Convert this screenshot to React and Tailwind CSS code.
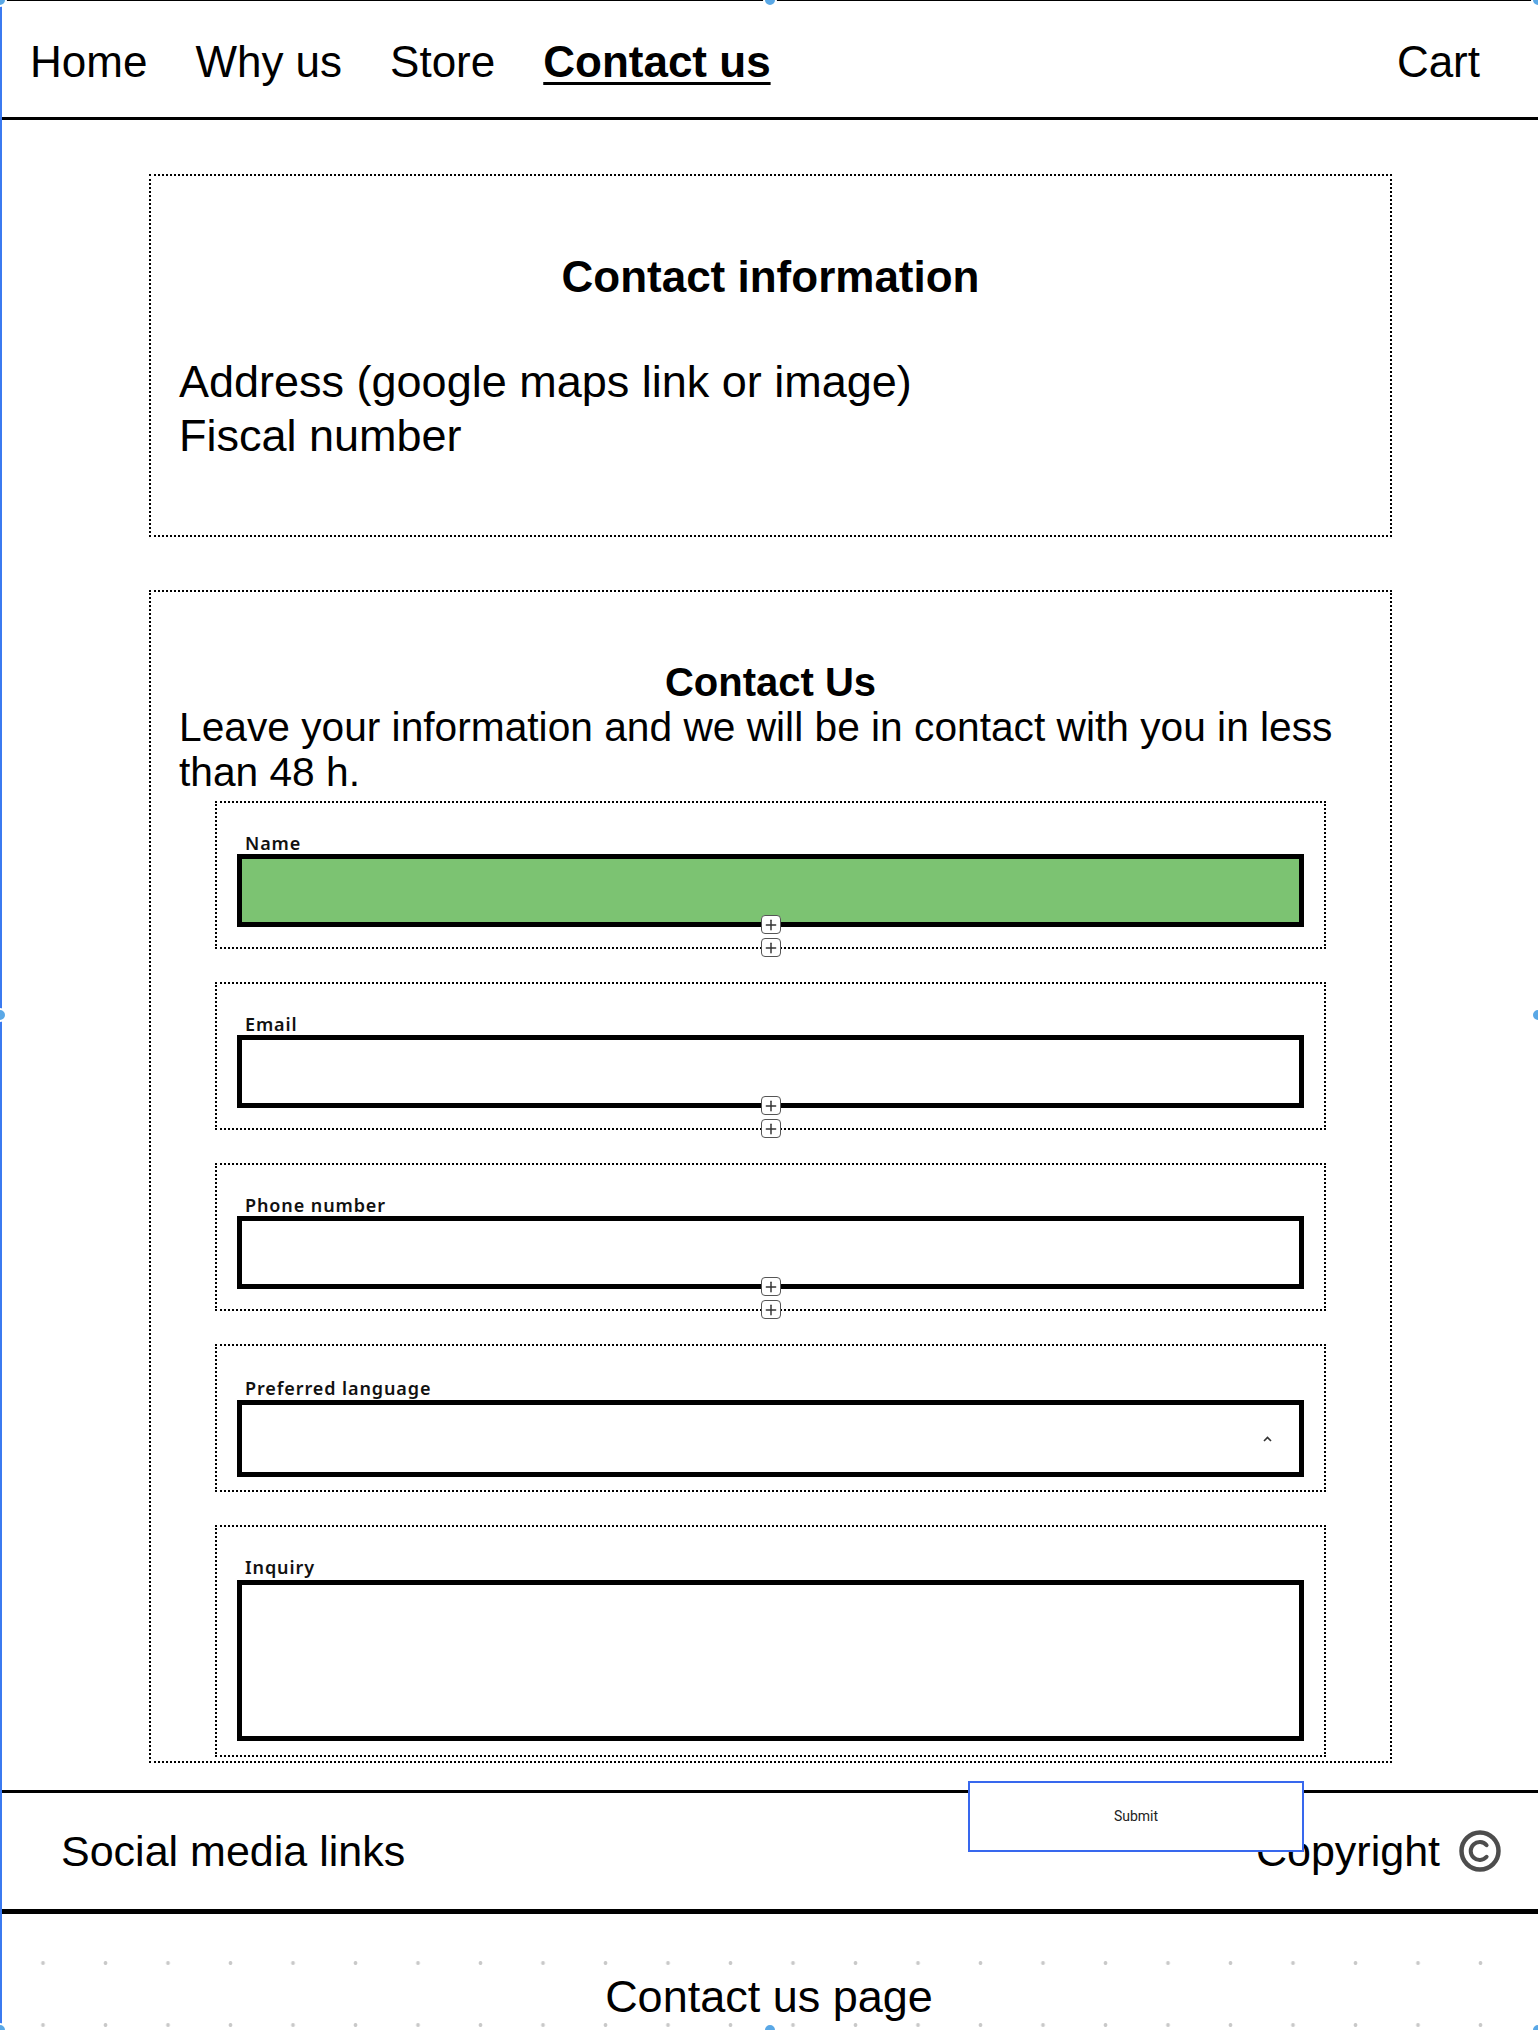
import React from 'react';
import { Plus } from 'lucide-react';

const navItems = ['Home', 'Why us', 'Store', 'Contact us'];

const AddHandle = ({ className }) => (
  <div className={`absolute left-1/2 -translate-x-1/2 w-[20px] h-[19px] bg-white border border-[#555] rounded-[4px] flex items-center justify-center ${className}`}>
    <Plus size={16} strokeWidth={2.2} className="text-[#333]" />
  </div>
);

const FieldLabel = ({ children }) => (
  <label className="block h-[22px] pl-[8px] leading-[22px] text-[18px] font-semibold tracking-[0.05em] text-[#111] font-['Noto_Sans',sans-serif]">
    {children}
  </label>
);

const FieldCard = ({ label, children, handles = false, tall = false }) => (
  <div className={`relative border-2 border-dotted border-black px-[20px] ${tall ? 'pt-[31px] pb-[13px]' : 'pt-[29px] pb-[20px]'}`}>
    <FieldLabel>{label}</FieldLabel>
    {children}
    {handles && (
      <>
        <AddHandle className="top-[112px]" />
        <AddHandle className="top-[135px]" />
      </>
    )}
  </div>
);

const CopyrightMark = () => (
  <svg width="44" height="44" viewBox="0 0 44 44" fill="none" className="text-[#4d4d4d]">
    <circle cx="22" cy="22" r="18.5" stroke="currentColor" strokeWidth="4.5" />
    <path d="M28.6 16.2a9 9 0 1 0 0 11.6" stroke="currentColor" strokeWidth="4" strokeLinecap="round" />
  </svg>
);

const handleDots = [
  'left-0 top-0',
  'left-[770px] top-0',
  'left-[1538px] top-0',
  'left-0 top-[1015px]',
  'left-[1538px] top-[1015px]',
  'left-0 top-[2030px]',
  'left-[770px] top-[2030px]',
  'left-[1538px] top-[2030px]',
];

export default function App() {
  return (
    <div className="relative w-[1538px] h-[2030px] overflow-hidden bg-white text-black font-['Liberation_Sans',Arial,sans-serif]">
      {/* top nav */}
      <nav className="h-[120px] border-t border-b-[3px] border-black flex items-center justify-between pl-[30px] pr-[58px] pt-[6px]">
        <div className="flex items-center gap-12 text-[44px] leading-[44px]">
          {navItems.map((item) => (
            <span
              key={item}
              className={item === 'Contact us' ? 'font-bold underline decoration-[3px] underline-offset-[5px]' : ''}
            >
              {item}
            </span>
          ))}
        </div>
        <span className="text-[44px] leading-[44px]">Cart</span>
      </nav>

      {/* contact information */}
      <section className="ml-[149px] mr-[146px] mt-[54px] border-2 border-dotted border-black px-[28px] pt-[76px] pb-[72px]">
        <h2 className="text-center text-[44px] leading-[50px] font-bold">Contact information</h2>
        <div className="mt-[53px] text-[45px] leading-[54px]">
          <p>Address (google maps link or image)</p>
          <p>Fiscal number</p>
        </div>
      </section>

      {/* contact form */}
      <section className="ml-[149px] mr-[146px] mt-[53px] h-[1173px] border-2 border-dotted border-black px-[28px] pt-[68px]">
        <h3 className="text-center text-[40px] leading-[45px] font-bold">Contact Us</h3>
        <p className="text-[40.7px] leading-[45px]">
          Leave your information and we will be in contact with you in less than 48 h.
        </p>
        <form className="mx-[36px] mt-[6px] flex flex-col gap-[33px]" onSubmit={(e) => e.preventDefault()}>
          <FieldCard label="Name" handles>
            <input className="block w-full h-[73px] border-[5px] border-black bg-[#7cc372] outline-none" />
          </FieldCard>
          <FieldCard label="Email" handles>
            <input className="block w-full h-[73px] border-[5px] border-black bg-white outline-none" />
          </FieldCard>
          <FieldCard label="Phone number" handles>
            <input className="block w-full h-[73px] border-[5px] border-black bg-white outline-none" />
          </FieldCard>
          <FieldCard label="Preferred language" tall>
            <div className="mt-[1px] w-full h-[77px] border-[5px] border-black bg-white flex items-center justify-end pr-[27px]">
              <svg width="9" height="6" viewBox="0 0 9 6" fill="none">
                <polyline points="1,5 4.5,1.5 8,5" stroke="#333" strokeWidth="1.6" />
              </svg>
            </div>
          </FieldCard>
          <div className="border-2 border-dotted border-black px-[20px] pt-[29px] pb-[14px]">
            <FieldLabel>Inquiry</FieldLabel>
            <textarea className="mt-[2px] block w-full h-[161px] border-[5px] border-black bg-white resize-none outline-none" />
          </div>
          <button
            type="submit"
            className="relative z-10 -mt-[9px] self-end mr-[22px] w-[336px] h-[71px] bg-white border-[2.5px] border-[#3868ee] text-[14px] text-[#222] font-['Roboto',sans-serif]"
          >
            Submit
          </button>
        </form>
      </section>

      {/* footer */}
      <footer className="mt-[27px] h-[124px] border-t-[3px] border-b-[5px] border-black flex items-center justify-between pl-[61px] pr-[36px]">
        <span className="text-[43px] leading-[50px]">Social media links</span>
        <div className="flex items-center gap-[18px]">
          <span className="text-[43px] leading-[50px]">Copyright</span>
          <CopyrightMark />
        </div>
      </footer>

      {/* canvas below frame */}
      <div className="h-[117px] pt-[58px] text-center bg-[radial-gradient(circle,#c9c9c9_1.6px,transparent_2.2px)] bg-[length:62.5px_62px] bg-[position:11.75px_18px]">
        <span className="text-[45px] leading-[50px]">Contact us page</span>
      </div>

      {/* selection overlay */}
      <div className="pointer-events-none absolute inset-0 border-l-2 border-[#3b7af0]" />
      {handleDots.map((pos) => (
        <div
          key={pos}
          className={`pointer-events-none absolute ${pos} -translate-x-1/2 -translate-y-1/2 w-[14px] h-[14px] rounded-full bg-[#5aa8e6] border-2 border-white`}
        />
      ))}
    </div>
  );
}
